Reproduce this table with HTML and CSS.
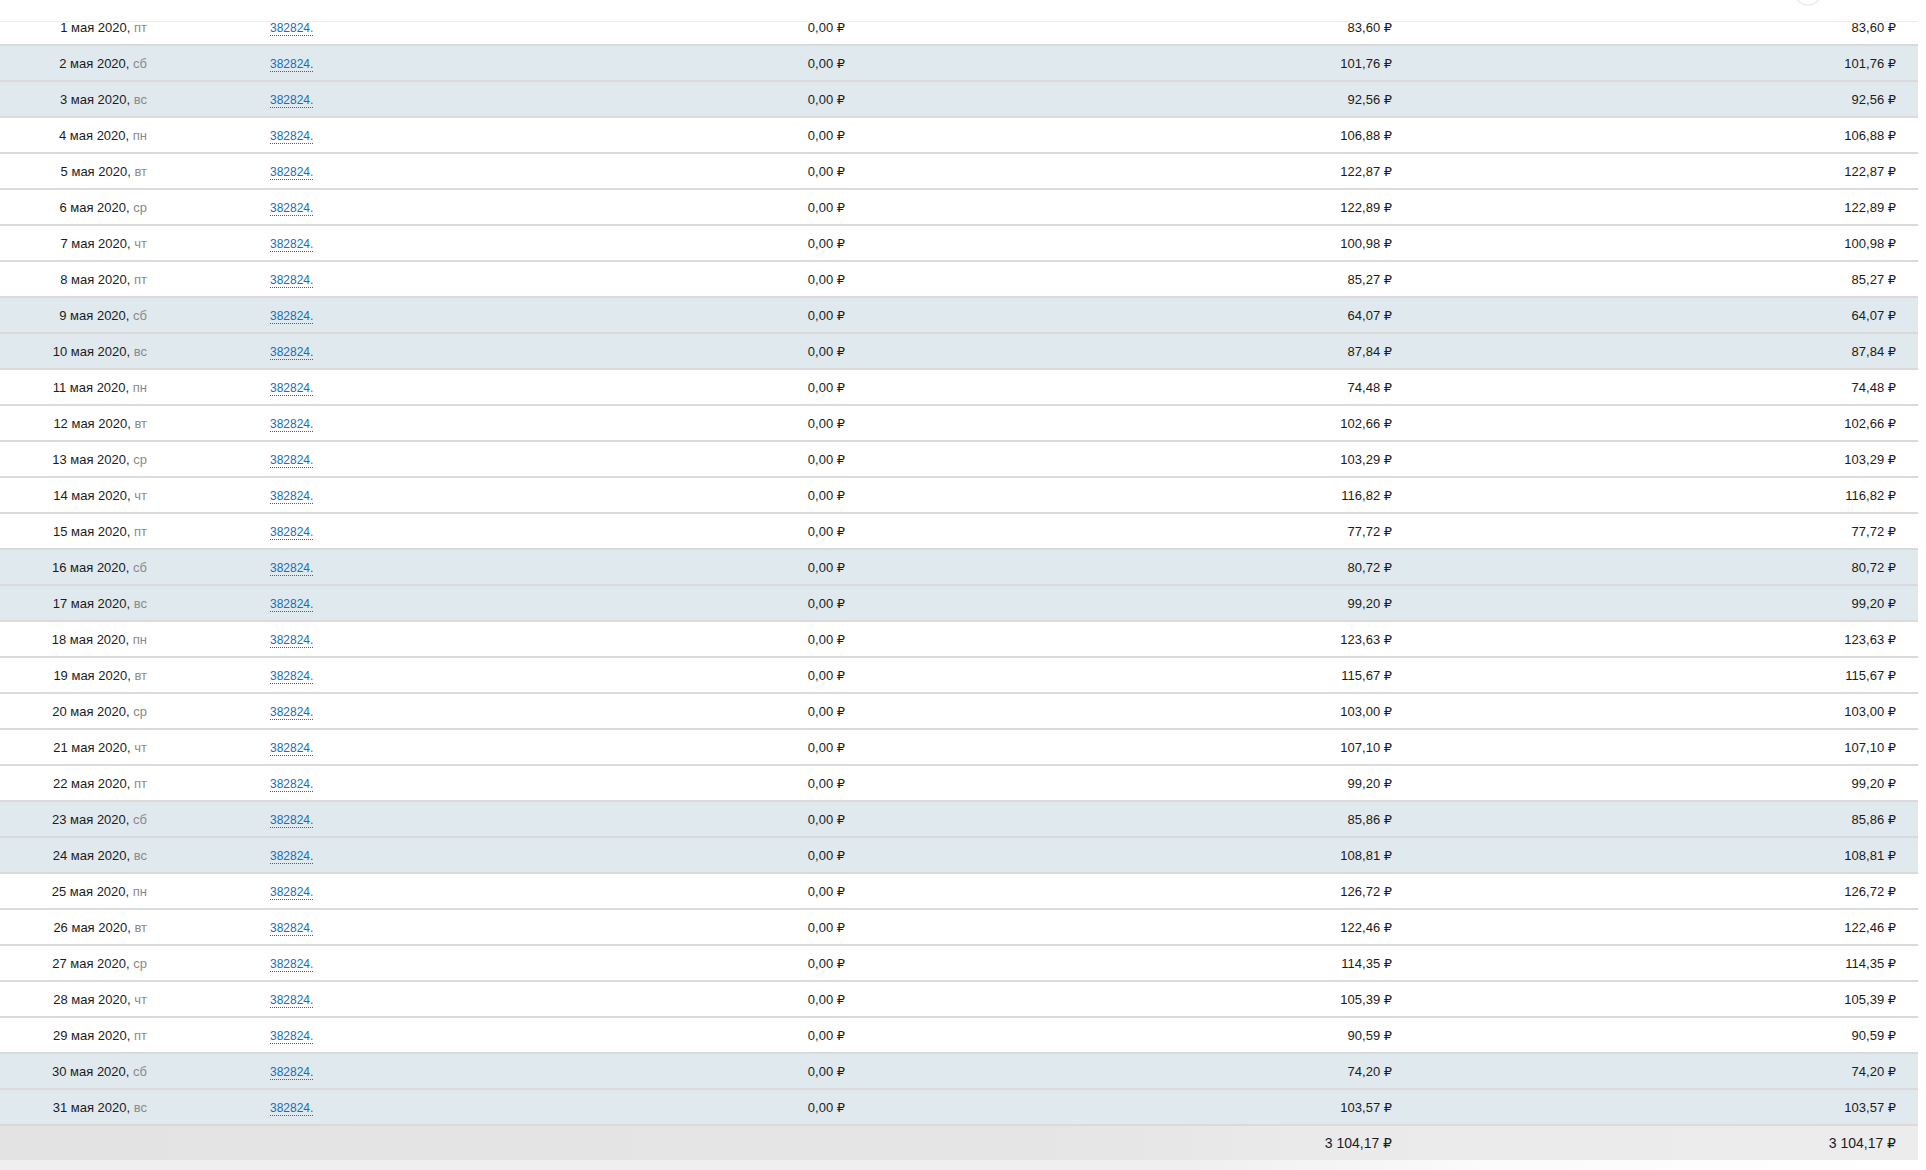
FILE: index.html
```html
<!DOCTYPE html>
<html lang="ru">
<head>
<meta charset="utf-8">
<title>Отчёт</title>
<link rel="stylesheet" href="styles.css">
</head>
<body>
<div class="sticky-head">
  <svg class="head-icon" width="40" height="20" viewBox="0 0 40 20"><circle cx="20" cy="-8" r="13" fill="none" stroke="#ececec" stroke-width="1.5"/></svg>
</div>
<div class="wrap">
<table class="report">
  <colgroup>
    <col class="c-date"><col class="c-id"><col class="c-zero"><col class="c-sum"><col class="c-total">
  </colgroup>
  <tbody>
    <tr><td class="date">1 мая 2020, <span class="wd">пт</span></td><td class="id"><a>382824.</a></td><td class="zero">0,00 ₽</td><td class="num">83,60 ₽</td><td class="num last">83,60 ₽</td></tr>
    <tr class="we"><td class="date">2 мая 2020, <span class="wd">сб</span></td><td class="id"><a>382824.</a></td><td class="zero">0,00 ₽</td><td class="num">101,76 ₽</td><td class="num last">101,76 ₽</td></tr>
    <tr class="we"><td class="date">3 мая 2020, <span class="wd">вс</span></td><td class="id"><a>382824.</a></td><td class="zero">0,00 ₽</td><td class="num">92,56 ₽</td><td class="num last">92,56 ₽</td></tr>
    <tr><td class="date">4 мая 2020, <span class="wd">пн</span></td><td class="id"><a>382824.</a></td><td class="zero">0,00 ₽</td><td class="num">106,88 ₽</td><td class="num last">106,88 ₽</td></tr>
    <tr><td class="date">5 мая 2020, <span class="wd">вт</span></td><td class="id"><a>382824.</a></td><td class="zero">0,00 ₽</td><td class="num">122,87 ₽</td><td class="num last">122,87 ₽</td></tr>
    <tr><td class="date">6 мая 2020, <span class="wd">ср</span></td><td class="id"><a>382824.</a></td><td class="zero">0,00 ₽</td><td class="num">122,89 ₽</td><td class="num last">122,89 ₽</td></tr>
    <tr><td class="date">7 мая 2020, <span class="wd">чт</span></td><td class="id"><a>382824.</a></td><td class="zero">0,00 ₽</td><td class="num">100,98 ₽</td><td class="num last">100,98 ₽</td></tr>
    <tr><td class="date">8 мая 2020, <span class="wd">пт</span></td><td class="id"><a>382824.</a></td><td class="zero">0,00 ₽</td><td class="num">85,27 ₽</td><td class="num last">85,27 ₽</td></tr>
    <tr class="we"><td class="date">9 мая 2020, <span class="wd">сб</span></td><td class="id"><a>382824.</a></td><td class="zero">0,00 ₽</td><td class="num">64,07 ₽</td><td class="num last">64,07 ₽</td></tr>
    <tr class="we"><td class="date">10 мая 2020, <span class="wd">вс</span></td><td class="id"><a>382824.</a></td><td class="zero">0,00 ₽</td><td class="num">87,84 ₽</td><td class="num last">87,84 ₽</td></tr>
    <tr><td class="date">11 мая 2020, <span class="wd">пн</span></td><td class="id"><a>382824.</a></td><td class="zero">0,00 ₽</td><td class="num">74,48 ₽</td><td class="num last">74,48 ₽</td></tr>
    <tr><td class="date">12 мая 2020, <span class="wd">вт</span></td><td class="id"><a>382824.</a></td><td class="zero">0,00 ₽</td><td class="num">102,66 ₽</td><td class="num last">102,66 ₽</td></tr>
    <tr><td class="date">13 мая 2020, <span class="wd">ср</span></td><td class="id"><a>382824.</a></td><td class="zero">0,00 ₽</td><td class="num">103,29 ₽</td><td class="num last">103,29 ₽</td></tr>
    <tr><td class="date">14 мая 2020, <span class="wd">чт</span></td><td class="id"><a>382824.</a></td><td class="zero">0,00 ₽</td><td class="num">116,82 ₽</td><td class="num last">116,82 ₽</td></tr>
    <tr><td class="date">15 мая 2020, <span class="wd">пт</span></td><td class="id"><a>382824.</a></td><td class="zero">0,00 ₽</td><td class="num">77,72 ₽</td><td class="num last">77,72 ₽</td></tr>
    <tr class="we"><td class="date">16 мая 2020, <span class="wd">сб</span></td><td class="id"><a>382824.</a></td><td class="zero">0,00 ₽</td><td class="num">80,72 ₽</td><td class="num last">80,72 ₽</td></tr>
    <tr class="we"><td class="date">17 мая 2020, <span class="wd">вс</span></td><td class="id"><a>382824.</a></td><td class="zero">0,00 ₽</td><td class="num">99,20 ₽</td><td class="num last">99,20 ₽</td></tr>
    <tr><td class="date">18 мая 2020, <span class="wd">пн</span></td><td class="id"><a>382824.</a></td><td class="zero">0,00 ₽</td><td class="num">123,63 ₽</td><td class="num last">123,63 ₽</td></tr>
    <tr><td class="date">19 мая 2020, <span class="wd">вт</span></td><td class="id"><a>382824.</a></td><td class="zero">0,00 ₽</td><td class="num">115,67 ₽</td><td class="num last">115,67 ₽</td></tr>
    <tr><td class="date">20 мая 2020, <span class="wd">ср</span></td><td class="id"><a>382824.</a></td><td class="zero">0,00 ₽</td><td class="num">103,00 ₽</td><td class="num last">103,00 ₽</td></tr>
    <tr><td class="date">21 мая 2020, <span class="wd">чт</span></td><td class="id"><a>382824.</a></td><td class="zero">0,00 ₽</td><td class="num">107,10 ₽</td><td class="num last">107,10 ₽</td></tr>
    <tr><td class="date">22 мая 2020, <span class="wd">пт</span></td><td class="id"><a>382824.</a></td><td class="zero">0,00 ₽</td><td class="num">99,20 ₽</td><td class="num last">99,20 ₽</td></tr>
    <tr class="we"><td class="date">23 мая 2020, <span class="wd">сб</span></td><td class="id"><a>382824.</a></td><td class="zero">0,00 ₽</td><td class="num">85,86 ₽</td><td class="num last">85,86 ₽</td></tr>
    <tr class="we"><td class="date">24 мая 2020, <span class="wd">вс</span></td><td class="id"><a>382824.</a></td><td class="zero">0,00 ₽</td><td class="num">108,81 ₽</td><td class="num last">108,81 ₽</td></tr>
    <tr><td class="date">25 мая 2020, <span class="wd">пн</span></td><td class="id"><a>382824.</a></td><td class="zero">0,00 ₽</td><td class="num">126,72 ₽</td><td class="num last">126,72 ₽</td></tr>
    <tr><td class="date">26 мая 2020, <span class="wd">вт</span></td><td class="id"><a>382824.</a></td><td class="zero">0,00 ₽</td><td class="num">122,46 ₽</td><td class="num last">122,46 ₽</td></tr>
    <tr><td class="date">27 мая 2020, <span class="wd">ср</span></td><td class="id"><a>382824.</a></td><td class="zero">0,00 ₽</td><td class="num">114,35 ₽</td><td class="num last">114,35 ₽</td></tr>
    <tr><td class="date">28 мая 2020, <span class="wd">чт</span></td><td class="id"><a>382824.</a></td><td class="zero">0,00 ₽</td><td class="num">105,39 ₽</td><td class="num last">105,39 ₽</td></tr>
    <tr><td class="date">29 мая 2020, <span class="wd">пт</span></td><td class="id"><a>382824.</a></td><td class="zero">0,00 ₽</td><td class="num">90,59 ₽</td><td class="num last">90,59 ₽</td></tr>
    <tr class="we"><td class="date">30 мая 2020, <span class="wd">сб</span></td><td class="id"><a>382824.</a></td><td class="zero">0,00 ₽</td><td class="num">74,20 ₽</td><td class="num last">74,20 ₽</td></tr>
    <tr class="we"><td class="date">31 мая 2020, <span class="wd">вс</span></td><td class="id"><a>382824.</a></td><td class="zero">0,00 ₽</td><td class="num">103,57 ₽</td><td class="num last">103,57 ₽</td></tr>
  </tbody>
  <tfoot>
    <tr class="total"><td></td><td></td><td></td><td class="num">3 104,17 ₽</td><td class="num last">3 104,17 ₽</td></tr>
  </tfoot>
</table>
<div class="after"></div>
</div>
</body>
</html>
```
FILE: styles.css
```css
html, body {
  margin: 0;
  padding: 0;
  background: #fff;
}
body {
  font-family: "Liberation Sans", Arial, "DejaVu Sans", sans-serif;
  font-size: 13px;
  color: #1c1c1c;
  overflow: hidden;
}
.sticky-head {
  position: fixed;
  top: 0;
  left: 0;
  width: 1918px;
  height: 21px;
  background: #fff;
  border-bottom: 1px solid #ececec;
  z-index: 2;
}
.head-icon {
  position: absolute;
  left: 1788px;
  top: 0;
}
.wrap {
  padding-top: 10px;
  width: 1918px;
}
.report {
  width: 1918px;
  border-collapse: collapse;
  table-layout: fixed;
}
.c-date { width: 160px; }
.c-id { width: 400px; }
.c-zero { width: 310px; }
.c-sum { width: 540px; }
.c-total { width: 508px; }
.report tbody tr {
  background: #fff;
  border-bottom: 2px solid #dadada;
}
.report tbody tr.we {
  background: #dfe9ee;
}
.report td {
  height: 34px;
  padding: 0;
  vertical-align: middle;
  white-space: nowrap;
}
.date {
  text-align: right;
  padding-right: 13px !important;
}
.wd {
  color: #8a8a8a;
}
.id {
  padding-left: 110px !important;
}
.id a {
  font-size: 12px;
  color: #1b6db5;
  text-decoration: none;
  border-bottom: 1px dotted #1b6db5;
}
.zero {
  text-align: right;
  padding-right: 25px !important;
}
.num {
  text-align: right;
  padding-right: 18px !important;
}
.num.last {
  padding-right: 22px !important;
}
.total td {
  font-size: 14px;
}
.total {
  background: linear-gradient(to right, #e3e3e3 0%, #e5e5e5 55%, #eaeaea 68%, #ececec 100%);
}
.after {
  height: 10px;
  background: linear-gradient(to right, #efefef 0%, #efefef 62%, #fbfbfb 78%, #ffffff 100%);
}
```
